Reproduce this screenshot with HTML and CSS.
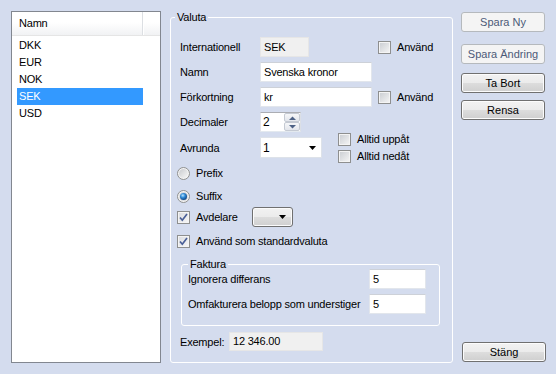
FILE: index.html
```html
<!DOCTYPE html>
<html>
<head>
    <meta charset="utf-8">
    <link rel="stylesheet" href="styles.css">
</head>
<body>
<div class="dialog">

    <div class="listbox">
        <div class="list-header">
            <div class="list-header__namn">Namn</div>
        </div>
        <ul class="list-items">
            <li>DKK</li>
            <li>EUR</li>
            <li>NOK</li>
            <li class="selected">SEK</li>
            <li>USD</li>
        </ul>
    </div>

    <fieldset class="group">
        <legend>Valuta</legend>
        <div class="group__body">

            <div class="row row--first">
                <div class="label">Internationell</div>
                <div class="field"><div class="textbox textbox--readonly textbox--short">SEK</div></div>
                <div class="check"><span class="checkbox"></span>Använd</div>
            </div>

            <div class="row">
                <div class="label">Namn</div>
                <div class="field"><div class="textbox">Svenska kronor</div></div>
            </div>

            <div class="row">
                <div class="label">Förkortning</div>
                <div class="field"><div class="textbox">kr</div></div>
                <div class="check"><span class="checkbox"></span>Använd</div>
            </div>

            <div class="row">
                <div class="label">Decimaler</div>
                <div class="spinner">
                    <span class="spinner__value">2</span>
                    <span class="spinner__buttons">
                        <span class="spin-btn">
                            <svg width="7" height="4" viewBox="0 0 7 4"><path d="M0 4 L3.5 0.5 L7 4 Z" fill="#4d6185"/></svg>
                        </span>
                        <span class="spin-btn">
                            <svg width="7" height="4" viewBox="0 0 7 4"><path d="M0 0 L3.5 3.5 L7 0 Z" fill="#4d6185"/></svg>
                        </span>
                    </span>
                </div>
            </div>

            <div class="row row--avrunda">
                <div class="label">Avrunda</div>
                <div class="combo">
                    <span class="combo__value">1</span>
                    <svg class="combo__arrow" width="7" height="4" viewBox="0 0 7 4"><path d="M0 0 L7 0 L3.5 4 Z" fill="#000"/></svg>
                </div>
                <div class="check-stack">
                    <div class="check"><span class="checkbox"></span>Alltid uppåt</div>
                    <div class="check"><span class="checkbox"></span>Alltid nedåt</div>
                </div>
            </div>

            <div class="row row--radio">
                <div class="check check--radio">
                    <svg class="radio" width="13" height="13" viewBox="0 0 13 13">
                        <defs>
                            <linearGradient id="radioBg" x1="0" y1="0" x2="1" y2="1">
                                <stop offset="0" stop-color="#c9cbcf"/>
                                <stop offset="1" stop-color="#f7f7f7"/>
                            </linearGradient>
                        </defs>
                        <circle cx="6.5" cy="6.5" r="6" fill="#f4f4f4" stroke="#8e8f8f"/>
                        <circle cx="6.5" cy="6.5" r="4.5" fill="url(#radioBg)"/>
                    </svg>
                    Prefix
                </div>
            </div>

            <div class="row row--suffix">
                <div class="check check--radio">
                    <svg class="radio" width="13" height="13" viewBox="0 0 13 13">
                        <defs>
                            <radialGradient id="radioDot" cx="0.4" cy="0.35" r="0.7">
                                <stop offset="0" stop-color="#b9e4ff"/>
                                <stop offset="0.45" stop-color="#2f8ad6"/>
                                <stop offset="1" stop-color="#0d3e7a"/>
                            </radialGradient>
                        </defs>
                        <circle cx="6.5" cy="6.5" r="6" fill="#f4f4f4" stroke="#8e8f8f"/>
                        <circle cx="6.5" cy="6.5" r="4.5" fill="#d8dadd"/>
                        <circle cx="6.5" cy="6.5" r="3.5" fill="url(#radioDot)"/>
                    </svg>
                    Suffix
                </div>
            </div>

            <div class="row row--avdelare">
                <div class="check check--avdelare">
                    <span class="checkbox checkbox--checked">
                        <svg width="11" height="11" viewBox="0 0 11 11"><path d="M2 5.5 L4.3 8.2 L9 2" fill="none" stroke="#4a5f97" stroke-width="1.7"/></svg>
                    </span>
                    Avdelare
                </div>
                <div class="combo combo--button">
                    <svg class="combo__arrow" width="7" height="4" viewBox="0 0 7 4"><path d="M0 0 L7 0 L3.5 4 Z" fill="#000"/></svg>
                </div>
            </div>

            <div class="row row--standard">
                <div class="check">
                    <span class="checkbox checkbox--checked">
                        <svg width="11" height="11" viewBox="0 0 11 11"><path d="M2 5.5 L4.3 8.2 L9 2" fill="none" stroke="#4a5f97" stroke-width="1.7"/></svg>
                    </span>
                    Använd som standardvaluta
                </div>
            </div>

            <fieldset class="group group--faktura">
                <legend>Faktura</legend>
                <div class="row row--faktura-first">
                    <div class="label label--faktura">Ignorera differans</div>
                    <div class="textbox textbox--small">5</div>
                </div>
                <div class="row">
                    <div class="label label--faktura">Omfakturera belopp som understiger</div>
                    <div class="textbox textbox--small">5</div>
                </div>
            </fieldset>

            <div class="row row--exempel">
                <div class="label label--exempel">Exempel:</div>
                <div class="textbox textbox--readonly textbox--exempel">12 346.00</div>
            </div>

        </div>
    </fieldset>

    <div class="buttons">
        <button class="btn btn--spara-ny" disabled>Spara Ny</button>
        <button class="btn btn--spara-andring" disabled>Spara Ändring</button>
        <button class="btn btn--ta-bort">Ta Bort</button>
        <button class="btn btn--rensa">Rensa</button>
        <button class="btn btn--stang">Stäng</button>
    </div>

</div>
</body>
</html>
```

FILE: styles.css
```css
html, body {
    margin: 0;
    background-color: #d4dcee;
    font-family: "Liberation Sans", Arial, sans-serif;
    font-size: 11px;
    letter-spacing: -0.2px;
    color: #000;
}

.dialog {
    display: flex;
    align-items: flex-start;
    width: 556px;
    height: 374px;
    padding: 11px 0 0 11px;
    box-sizing: border-box;
}

/* list */

.listbox {
    width: 150px;
    height: 352px;
    box-sizing: border-box;
    border: 1px solid #828790;
    background-color: #ffffff;
}

.list-header {
    display: flex;
    height: 24px;
    box-sizing: border-box;
    border-bottom: 1px solid #e5e5e5;
    background: linear-gradient(#ffffff 0%, #ffffff 45%, #f1f2f4 100%);
}

.list-header__namn {
    width: 131px;
    box-sizing: border-box;
    padding-left: 7px;
    line-height: 23px;
    border-right: 1px solid #dcdfe3;
    box-shadow: 1px 0 0 #ffffff;
}

.list-items {
    list-style: none;
    margin: 1px 0 0 5px;
    padding: 0;
}

.list-items li {
    width: 126px;
    height: 17px;
    line-height: 17px;
    padding-left: 2px;
    box-sizing: border-box;
}

.list-items li.selected {
    background-color: #3399ff;
    color: #ffffff;
}

/* group boxes */

.group {
    margin: 0 0 0 9px;
    padding: 0;
    width: 283px;
    height: 352px;
    box-sizing: border-box;
    border: 1px solid #ffffff;
    border-radius: 3px;
    min-width: 0;
}

.group legend {
    margin-left: 4px;
    padding: 0 2px;
    line-height: 13px;
}

.group__body {
    padding-left: 9px;
}

.row {
    display: flex;
    align-items: center;
    height: 20px;
    margin-top: 5px;
}

.row--first {
    margin-top: 13px;
}

.row--avrunda {
    height: 21px;
}

.row--radio {
    margin-top: 5px;
}

.row--suffix {
    margin-top: 3px;
}

.row--avdelare {
    margin-top: 1px;
}

.row--standard {
    margin-top: 4px;
}

.label {
    width: 80px;
    flex-shrink: 0;
    white-space: nowrap;
}

.field {
    width: 112px;
    flex-shrink: 0;
}

/* inputs */

.textbox {
    height: 20px;
    box-sizing: border-box;
    border: 1px solid #e2e6ec;
    border-top-color: #cdd1d8;
    background-color: #ffffff;
    padding-left: 3px;
    line-height: 18px;
    white-space: nowrap;
}

.textbox--readonly {
    background-color: #f0f0f0;
    border-color: #e6e6e6;
}

.textbox--short {
    width: 49px;
}

.textbox--small {
    width: 57px;
    flex-shrink: 0;
}

.textbox--exempel {
    width: 94px;
    height: 19px;
    line-height: 17px;
}

.spinner {
    display: flex;
    width: 41px;
    height: 20px;
    box-sizing: border-box;
    border: 1px solid #c9ccd2;
    border-color: #abadb3 #dbdfe6 #e3e9ef #e2e3ea;
    background-color: #ffffff;
}

.spinner__value {
    flex: 1;
    padding-left: 2px;
    line-height: 18px;
    font-size: 12px;
}

.spinner__buttons {
    display: flex;
    flex-direction: column;
    width: 16px;
}

.spin-btn {
    flex: 1;
    display: flex;
    align-items: center;
    justify-content: center;
    border: 1px solid #c5cad3;
    border-radius: 2px;
    background: linear-gradient(#f6f7f9, #e3e6ec);
}

.combo {
    display: flex;
    align-items: center;
    width: 62px;
    height: 21px;
    box-sizing: border-box;
    border: 1px solid #dde2e9;
    background-color: #ffffff;
}

.combo__value {
    flex: 1;
    padding-left: 2px;
    font-size: 12px;
}

.combo__arrow {
    margin-right: 5px;
}

.combo--button {
    width: 41px;
    height: 20px;
    justify-content: flex-end;
    border: 1px solid #707070;
    border-radius: 3px;
    background: linear-gradient(#f2f2f2 0%, #ebebeb 50%, #dddddd 50%, #cfcfcf 100%);
    box-shadow: inset 0 0 0 1px #fbfbfb;
}

.combo--button .combo__arrow {
    margin-right: 6px;
}

/* check boxes and radios */

.check {
    display: flex;
    align-items: center;
    margin-left: 6px;
    white-space: nowrap;
}

.checkbox {
    display: flex;
    align-items: center;
    justify-content: center;
    width: 13px;
    height: 13px;
    box-sizing: border-box;
    margin-right: 6px;
    border: 1px solid #8e8f8f;
    background: linear-gradient(135deg, #c9ccd1 0%, #f6f6f6 100%);
    box-shadow: inset 0 0 0 1px #f4f4f4;
}

.checkbox--checked {
    background: linear-gradient(135deg, #d9dbdf 0%, #f8f8f8 100%);
}

.check-stack {
    display: flex;
    flex-direction: column;
    margin-left: 10px;
}

.check-stack .check {
    height: 17px;
}

.check--radio {
    margin-left: -3px;
}

.radio {
    margin-right: 6px;
}

.check--avdelare {
    width: 75px;
    margin-left: -3px;
}

.row--standard .check {
    margin-left: -3px;
}

/* faktura */

.group--faktura {
    margin: 7px 0 0 1px;
    width: 259px;
    height: 68px;
}

.group--faktura legend {
    margin-left: 6px;
}

.row--faktura-first {
    margin-top: -2px;
}

.label--faktura {
    width: 187px;
    padding-left: 6px;
    box-sizing: border-box;
}

.row--exempel {
    height: 19px;
    margin-top: 6px;
}

.label--exempel {
    width: 49px;
}

/* buttons */

.buttons {
    display: flex;
    flex-direction: column;
    width: 85px;
    height: 352px;
    margin-left: 8px;
}

.btn {
    width: 84px;
    height: 20px;
    box-sizing: border-box;
    padding: 0;
    border: 1px solid #707070;
    border-radius: 3px;
    background: linear-gradient(#f2f2f2 0%, #ebebeb 50%, #dddddd 50%, #cfcfcf 100%);
    box-shadow: inset 0 0 0 1px #fcfcfc;
    font: inherit;
    color: #000;
}

.btn:disabled {
    border-color: #b5b9bd;
    background: #f4f4f4;
    box-shadow: none;
    color: #4c5a78;
}

.btn--spara-ny {
    margin-top: 1px;
}

.btn--spara-andring {
    margin-top: 12px;
}

.btn--ta-bort {
    margin-top: 9px;
}

.btn--rensa {
    margin-top: 7px;
}

.btn--stang {
    margin-top: auto;
    margin-left: 1px;
    margin-bottom: 1px;
}
```
